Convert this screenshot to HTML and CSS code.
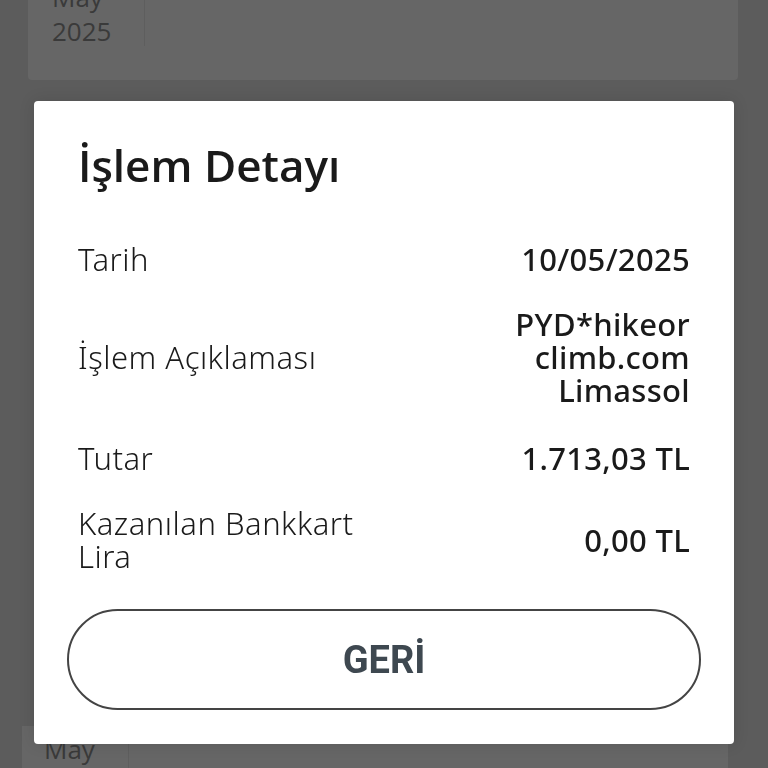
FILE: index.html
```html
<!DOCTYPE html>
<html lang="tr">
<head>
<meta charset="utf-8">
<link rel="stylesheet" href="styles.css">
</head>
<body>
<div class="page">
  <div class="bg-card top">
    <div class="date">May<br>2025</div>
    <div class="divider"></div>
  </div>
  <div class="bg-card bottom">
    <div class="date">May<br>2025</div>
    <div class="divider"></div>
  </div>
</div>
<div class="overlay">
  <div class="modal">
    <h1 class="title">İşlem Detayı</h1>
    <div class="rows">
      <div class="row">
        <div class="label">Tarih</div>
        <div class="value">10/05/2025</div>
      </div>
      <div class="row">
        <div class="label">İşlem Açıklaması</div>
        <div class="value">PYD*hikeor<br>climb.com<br>Limassol</div>
      </div>
      <div class="row tall">
        <div class="label">Tutar</div>
        <div class="value">1.713,03 TL</div>
      </div>
      <div class="row">
        <div class="label">Kazanılan Bankkart<br>Lira</div>
        <div class="value">0,00 TL</div>
      </div>
    </div>
    <button class="back">GERİ</button>
  </div>
</div>
</body>
</html>
```

FILE: styles.css
```css
html, body {
  margin: 0;
  padding: 0;
  height: 100%;
}
body {
  background: #5c5c5c;
  font-family: "Open Sans", "Noto Sans", sans-serif;
  overflow: hidden;
}
.page {
  height: 768px;
  display: flex;
  flex-direction: column;
  justify-content: space-between;
}
.bg-card {
  background: #666666;
  display: flex;
  color: #3a3a3a;
  font-family: "Open Sans", sans-serif;
  font-size: 26px;
  line-height: 34px;
}
.bg-card.top {
  margin: -20px 30px 0 28px;
  height: 100px;
  border-radius: 0 0 4px 4px;
}
.bg-card.top .date {
  padding: 0 0 0 24px;
  width: 92px;
}
.bg-card.top .divider {
  width: 1px;
  height: 66px;
  background: #5e5e5e;
}
.bg-card.bottom {
  margin: 0 40px 0 22px;
  height: 42px;
}
.bg-card.bottom .date {
  padding: 6px 0 0 22px;
  width: 84px;
}
.bg-card.bottom .divider {
  width: 1px;
  height: 42px;
  background: #5e5e5e;
}
.overlay {
  position: fixed;
  inset: 0;
}
.modal {
  position: absolute;
  left: 34px;
  top: 101px;
  width: 700px;
  height: 643px;
  box-sizing: border-box;
  background: #ffffff;
  border-radius: 4px;
  padding: 39px 33px 33px;
  display: flex;
  flex-direction: column;
  box-shadow: 0 0 16px rgba(0,0,0,0.12);
}
.title {
  margin: 0;
  padding: 0 11px;
  font-family: "Open Sans", sans-serif;
  font-weight: 600;
  font-size: 44px;
  line-height: 50px;
  color: #1a1a1a;
}
.rows {
  margin-top: 53px;
  padding: 0 11px;
  display: flex;
  flex-direction: column;
  gap: 32px;
}
.row {
  display: flex;
  justify-content: space-between;
  align-items: center;
  font-size: 31px;
  line-height: 33px;
  color: #1a1a1a;
}
.row.tall {
  margin-top: 3px;
}
.label {
  font-family: "Noto Sans", sans-serif;
  font-weight: 300;
  letter-spacing: 0.5px;
}
.value {
  text-align: right;
  font-family: "Noto Sans", sans-serif;
  font-weight: 500;
  letter-spacing: 0.3px;
}
.back {
  margin-top: 36px;
  height: 101px;
  width: 100%;
  border: 2px solid #444444;
  border-radius: 51px;
  background: #ffffff;
  font-family: "Roboto", sans-serif;
  font-weight: 700;
  font-size: 38px;
  color: #3e4850;
}
```
